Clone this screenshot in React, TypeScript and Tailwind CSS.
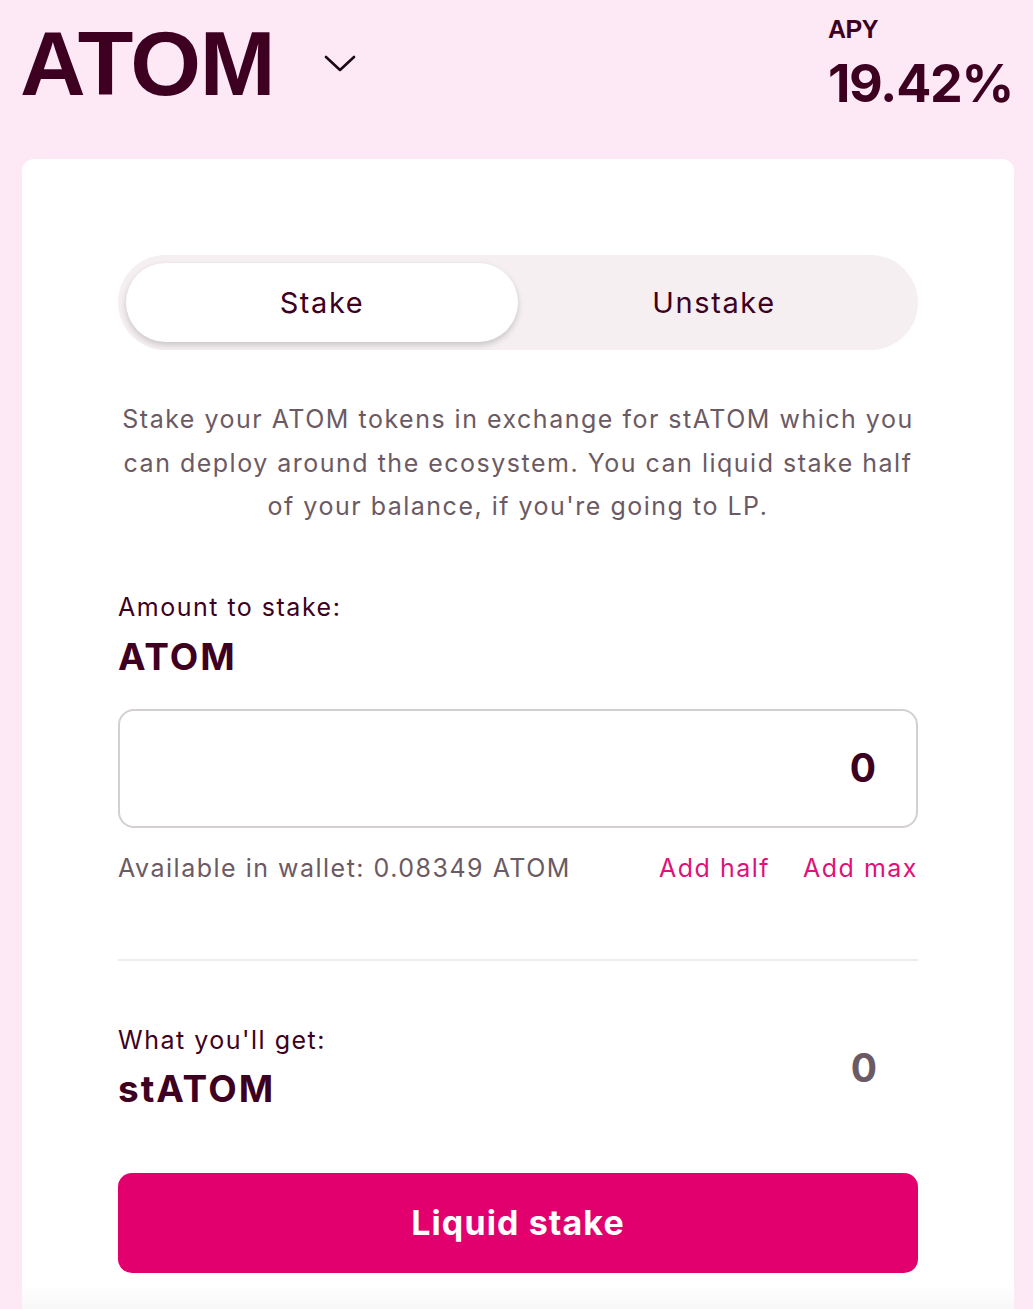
import React from "react";

export default function App() {
  const inter = { fontFamily: "Inter, 'Noto Sans', sans-serif" };
  return (
    <div className="min-h-[1309px] w-[1033px] bg-[#fde8f6] overflow-hidden" style={inter}>
      {/* Header */}
      <div className="flex h-[159px] justify-between pl-[20px] pr-[23px]">
        <div className="flex items-start pt-[18px]">
          <span
            className="text-[91px] font-bold leading-none tracking-[-1.3px] text-[#3d0021]"
            style={{ fontFamily: "'Liberation Sans', Arial, sans-serif" }}
          >
            ATOM
          </span>
          <svg className="ml-[50px] mt-[36px]" width="32" height="20" viewBox="0 0 32 20" fill="none">
            <path d="M2 3 L16 16 L30 3" stroke="#1a0a12" strokeWidth="2.6" strokeLinecap="round" strokeLinejoin="round" />
          </svg>
        </div>
        <div className="flex w-[182px] flex-col pt-[17px]">
          <span
            className="text-[25px] font-bold leading-none tracking-[-0.5px] text-[#3d0021]"
            style={{ fontFamily: "'Liberation Sans', Arial, sans-serif" }}
          >
            APY
          </span>
          <span className="mt-[16px] text-[52px] font-bold leading-none tracking-[-1.3px] text-[#3d0021]">19.42%</span>
        </div>
      </div>

      {/* Card */}
      <div className="ml-[22px] mr-[19px] rounded-t-[12px] bg-white px-[96px] pt-[96px]">
        {/* Toggle */}
        <div className="grid h-[95px] grid-cols-2 rounded-full bg-[#f5eff2] p-[8px]">
          <div className="flex items-center justify-center rounded-full bg-white text-[29px] tracking-[1.6px] text-[#3d0021] shadow-[0_3px_6px_rgba(0,0,0,0.18)]">
            Stake
          </div>
          <div className="flex items-center justify-center text-[29px] tracking-[1.6px] text-[#3d0021]">Unstake</div>
        </div>

        <p className="mt-[48px] text-center text-[25px] leading-[43.5px] tracking-[1.5px] text-[#6b5a63]">
          Stake your ATOM tokens in exchange for stATOM which you can deploy around the ecosystem. You can liquid stake half of your balance, if you're going to LP.
        </p>

        <div className="mt-[60px] text-[25px] leading-[37px] tracking-[1.5px] text-[#3d0021]">Amount to stake:</div>
        <div className="mt-[6px] text-[37px] font-bold leading-[50px] tracking-[2px] text-[#3d0021]">ATOM</div>

        <div className="mt-[27px] flex h-[119px] items-center justify-end rounded-[16px] border-2 border-[#d4d0d2] pr-[40px]">
          <span className="text-[39px] font-bold text-[#3d0021]">0</span>
        </div>

        <div className="mt-[22px] flex items-center text-[25px] leading-[37px] tracking-[1.5px]">
          <span className="text-[#6b5a63]">Available in wallet: 0.08349 ATOM</span>
          <span className="ml-auto text-[#e0117a]">Add half</span>
          <span className="ml-[33px] text-[#e0117a]">Add max</span>
        </div>

        <div className="mt-[72px] h-[2px] bg-[#eeeeee]" />

        <div className="mt-[61px] flex items-start justify-between">
          <div>
            <div className="text-[25px] leading-[37px] tracking-[1.5px] text-[#3d0021]">What you'll get:</div>
            <div className="mt-[5px] text-[37px] font-bold leading-[50px] tracking-[2px] text-[#3d0021]">stATOM</div>
          </div>
          <span className="mr-[41px] mt-[21px] text-[39px] font-bold leading-[50px] text-[#6b5a63]">0</span>
        </div>

        <button className="mt-[59px] flex h-[100px] w-full items-center justify-center rounded-[14px] bg-[#e2006f] text-[34px] font-bold tracking-[1.1px] text-white">
          Liquid stake
        </button>

        <div className="-mx-[96px] mt-[12px] h-[40px] bg-gradient-to-b from-white to-[#f2f2f2]" />
      </div>
    </div>
  );
}
